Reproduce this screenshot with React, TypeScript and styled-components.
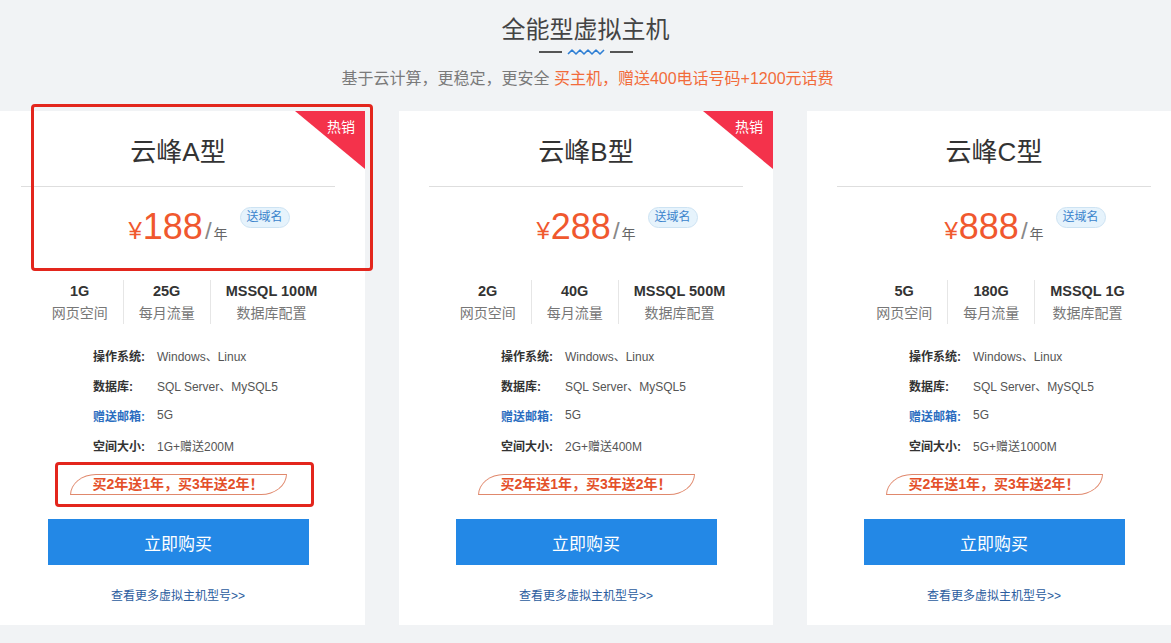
import React from 'react'
import styled, { createGlobalStyle } from 'styled-components'

const GlobalStyle = createGlobalStyle`
  html, body {
    margin: 0;
    padding: 0;
    background: #f1f3f5;
    font-family: "Liberation Sans", "Noto Sans CJK SC", sans-serif;
  }
`

type Plan = {
  name: string
  price: number
  hot: boolean
  space: string
  traffic: string
  db: string
  size: string
}

const plans: Plan[] = [
  { name: '云峰A型', price: 188, hot: true, space: '1G', traffic: '25G', db: 'MSSQL 100M', size: '1G+赠送200M' },
  { name: '云峰B型', price: 288, hot: true, space: '2G', traffic: '40G', db: 'MSSQL 500M', size: '2G+赠送400M' },
  { name: '云峰C型', price: 888, hot: false, space: '5G', traffic: '180G', db: 'MSSQL 1G', size: '5G+赠送1000M' },
]

const Wave = () => (
  <svg width="38" height="8" viewBox="0 0 38 8">
    <polyline
      points="1,6 5,2 9,6 13,2 17,6 21,2 25,6 29,2 33,6 37,2"
      fill="none"
      stroke="#2f7fd4"
      strokeWidth="1.6"
      strokeLinejoin="round"
    />
  </svg>
)

const PlanCard = ({ plan, marked }: { plan: Plan; marked?: boolean }) => (
  <Card>
    {plan.hot && (
      <>
        <HotCorner />
        <HotText>热销</HotText>
      </>
    )}
    <CardTitle>{plan.name}</CardTitle>
    <Divider />
    <PriceRow>
      <Price>
        <Yen>¥</Yen>
        <Amount>{plan.price}</Amount>
        <Slash>/</Slash>
        <Unit>年</Unit>
        <Gift>送域名</Gift>
      </Price>
    </PriceRow>
    <Specs>
      <Spec>
        <SpecValue>{plan.space}</SpecValue>
        <SpecLabel>网页空间</SpecLabel>
      </Spec>
      <Spec>
        <SpecValue>{plan.traffic}</SpecValue>
        <SpecLabel>每月流量</SpecLabel>
      </Spec>
      <Spec>
        <SpecValue>{plan.db}</SpecValue>
        <SpecLabel>数据库配置</SpecLabel>
      </Spec>
    </Specs>
    <Details>
      <DetailRow>
        <DetailKey>操作系统:</DetailKey>
        <DetailValue>Windows、Linux</DetailValue>
      </DetailRow>
      <DetailRow>
        <DetailKey>数据库:</DetailKey>
        <DetailValue>SQL Server、MySQL5</DetailValue>
      </DetailRow>
      <DetailRow>
        <DetailKey $link>赠送邮箱:</DetailKey>
        <DetailValue>5G</DetailValue>
      </DetailRow>
      <DetailRow>
        <DetailKey>空间大小:</DetailKey>
        <DetailValue>{plan.size}</DetailValue>
      </DetailRow>
    </Details>
    <Promo>买2年送1年，买3年送2年！</Promo>
    <BuyButton>立即购买</BuyButton>
    <MoreLink>查看更多虚拟主机型号&gt;&gt;</MoreLink>
    {marked && (
      <>
        <Mark $left={40} $top={-7} $width={342} $height={167} />
        <Mark $left={64} $top={351} $width={259} $height={45} />
      </>
    )}
  </Card>
)

export default function App() {
  return (
    <Page>
      <GlobalStyle />
      <Header>
        <Title>全能型虚拟主机</Title>
        <Deco>
          <DecoLine />
          <Wave />
          <DecoLine />
        </Deco>
        <Subtitle>
          基于云计算，更稳定，更安全 <Accent>买主机，赠送400电话号码+1200元话费</Accent>
        </Subtitle>
      </Header>
      <Cards>
        {plans.map((p, i) => (
          <PlanCard key={p.name} plan={p} marked={i === 0} />
        ))}
      </Cards>
    </Page>
  )
}

const Page = styled.div`
  width: 1171px;
  height: 643px;
  overflow: hidden;
  background: #f1f3f5;
`

const Header = styled.div`
  display: flex;
  flex-direction: column;
  align-items: center;
  padding-top: 13px;
`

const Title = styled.h1`
  margin: 0;
  font-size: 24px;
  font-weight: normal;
  line-height: 34px;
  color: #444;
`

const Deco = styled.div`
  display: flex;
  align-items: center;
  gap: 5px;
  height: 10px;
`

const DecoLine = styled.span`
  width: 23px;
  height: 2px;
  background: #555;
`

const Subtitle = styled.p`
  margin: 10px 0 0 4px;
  font-size: 16px;
  line-height: 24px;
  color: #7a7a7a;
`

const Accent = styled.span`
  color: #f26b3a;
`

const Cards = styled.div`
  display: flex;
  gap: 34px;
  margin-left: -9px;
  margin-top: 20px;
`

const Card = styled.div`
  position: relative;
  flex: 0 0 374px;
  height: 514px;
  background: #fff;
  display: flex;
  flex-direction: column;
`

const HotCorner = styled.div`
  position: absolute;
  top: 0;
  right: 0;
  width: 70px;
  height: 58px;
  background: #f4324b;
  clip-path: polygon(0 0, 100% 0, 100% 100%);
`

const HotText = styled.span`
  position: absolute;
  top: 6px;
  right: 10px;
  font-size: 14px;
  line-height: 20px;
  color: #fff;
`

const CardTitle = styled.h2`
  margin: 0;
  padding-top: 22px;
  text-align: center;
  font-size: 26px;
  line-height: 38px;
  font-weight: normal;
  color: #333;
  height: 53px;
`

const Divider = styled.div`
  height: 1px;
  margin: 0 30px;
  background: #dedede;
`

const PriceRow = styled.div`
  display: flex;
  justify-content: center;
  margin-top: 18px;
  height: 44px;
`

const Price = styled.div`
  position: relative;
  display: flex;
  align-items: baseline;
  line-height: 44px;
  color: #f0582e;
`

const Yen = styled.span`
  font-size: 24px;
`

const Amount = styled.span`
  font-size: 36px;
  margin-left: 1px;
`

const Slash = styled.span`
  font-size: 24px;
  color: #888;
  margin-left: 2px;
`

const Unit = styled.span`
  font-size: 14px;
  color: #666;
  margin-left: 2px;
`

const Gift = styled.span`
  position: absolute;
  left: calc(100% + 12px);
  top: 2px;
  width: 48px;
  height: 19px;
  border: 1px solid #cde3f3;
  border-radius: 11px;
  background: #e6f3fc;
  font-size: 12px;
  line-height: 19px;
  text-align: center;
  color: #3a84cc;
  white-space: nowrap;
`

const Specs = styled.div`
  display: flex;
  justify-content: center;
  margin-top: 31px;
  padding-left: 13px;
`

const Spec = styled.div`
  display: flex;
  flex-direction: column;
  align-items: center;
  padding: 0 15px;
  & + & {
    border-left: 1px solid #e6e6e6;
  }
`

const SpecValue = styled.span`
  font-size: 14.5px;
  font-weight: bold;
  line-height: 22px;
  color: #333;
  white-space: nowrap;
`

const SpecLabel = styled.span`
  font-size: 14px;
  line-height: 22px;
  color: #777;
  white-space: nowrap;
`

const Details = styled.div`
  display: flex;
  flex-direction: column;
  margin-top: 16px;
  padding-left: 102px;
`

const DetailRow = styled.div`
  display: flex;
  height: 30px;
  align-items: center;
  font-size: 12px;
`

const DetailKey = styled.span<{ $link?: boolean }>`
  width: 64px;
  font-weight: bold;
  color: ${p => (p.$link ? '#2a6dc0' : '#333')};
`

const DetailValue = styled.span`
  color: #555;
`

const Promo = styled.div`
  align-self: center;
  margin-top: 14px;
  width: 215px;
  height: 19px;
  border: 1px solid #e0886c;
  border-radius: 26px 0 26px 0 / 21px 0 21px 0;
  font-size: 14px;
  font-weight: bold;
  line-height: 19px;
  text-align: center;
  color: #e4502a;
`

const BuyButton = styled.button`
  align-self: center;
  margin-top: 24px;
  width: 261px;
  height: 46px;
  border: none;
  background: #2388e6;
  color: #fff;
  font-family: inherit;
  font-size: 17px;
  cursor: pointer;
`

const MoreLink = styled.a`
  align-self: center;
  margin-top: 21px;
  font-size: 12px;
  line-height: 20px;
  color: #2b5c9e;
  text-decoration: none;
`

const Mark = styled.div<{ $left: number; $top: number; $width: number; $height: number }>`
  position: absolute;
  left: ${p => p.$left}px;
  top: ${p => p.$top}px;
  width: ${p => p.$width}px;
  height: ${p => p.$height}px;
  box-sizing: border-box;
  border: 3px solid #e3261d;
  border-radius: 4px;
  pointer-events: none;
`
